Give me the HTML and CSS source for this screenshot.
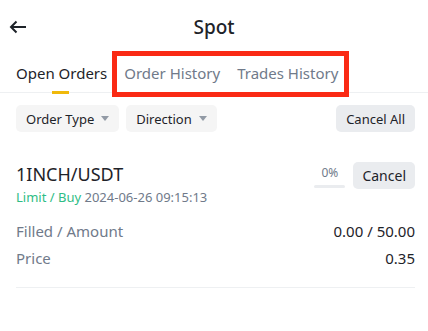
FILE: index.html
```html
<!DOCTYPE html>
<html lang="en">
<head>
    <meta charset="UTF-8">
    <meta name="viewport" content="width=device-width, initial-scale=1.0">
    <title>Spot</title>
    <link rel="stylesheet" href="styles.css">
</head>
<body>
    <header class="topbar">
        <button class="back" type="button" aria-label="Back">
            <svg width="18" height="14" viewBox="0 0 18 14"><path d="M17 7H2M7.5 1.5L2 7l5.5 5.5" fill="none" stroke="#1e2329" stroke-width="2"/></svg>
        </button>
        <h1>Spot</h1>
    </header>

    <nav class="tabs">
        <span class="tab active">Open Orders</span>
        <span class="tab">Order History</span>
        <span class="tab">Trades History</span>
        <div class="highlight"></div>
    </nav>

    <div class="filters">
        <button class="chip" type="button">Order Type <span class="caret"></span></button>
        <button class="chip" type="button">Direction <span class="caret"></span></button>
        <button class="chip dark push" type="button">Cancel All</button>
    </div>

    <div class="order">
        <div class="order-top">
            <div>
                <div class="pair">1INCH/USDT</div>
                <div class="meta"><span class="side">Limit / Buy</span> 2024-06-26 09:15:13</div>
            </div>
            <div class="actions">
                <div class="progress">
                    <span>0%</span>
                    <div class="bar"></div>
                </div>
                <button class="chip dark cancel" type="button">Cancel</button>
            </div>
        </div>
        <div class="row"><span class="label">Filled / Amount</span><span>0.00 / 50.00</span></div>
        <div class="row"><span class="label">Price</span><span>0.35</span></div>
    </div>
</body>
</html>
```

FILE: styles.css
```css
body {
    margin: 0;
    font-family: "Noto Sans", Arial, sans-serif;
    background-color: #fff;
    color: #1e2329;
}
.topbar {
    position: relative;
    height: 54px;
    display: flex;
    align-items: center;
    justify-content: center;
}
.topbar h1 {
    margin: 0;
    font-size: 19px;
    font-weight: 500;
}
.back {
    position: absolute;
    left: 9px;
    top: 20px;
    border: none;
    background: none;
    padding: 0;
    display: flex;
}
.tabs {
    position: relative;
    height: 38px;
    display: flex;
    align-items: center;
    gap: 17px;
    padding: 0 16px;
    border-bottom: 1px solid #eef0f2;
}
.tab {
    position: relative;
    font-size: 15px;
    color: #707a8a;
}
.tab.active {
    color: #1e2329;
}
.tab.active::after {
    content: "";
    position: absolute;
    left: 36px;
    width: 17px;
    height: 3px;
    bottom: -11px;
    background-color: #f0b90b;
}
.highlight {
    position: absolute;
    left: 112px;
    top: -3px;
    width: 227px;
    height: 36px;
    border: 5px solid #fa2a14;
}
.filters {
    display: flex;
    gap: 7px;
    padding: 12px 13px 0 16px;
}
.chip {
    font-family: inherit;
    font-size: 13px;
    color: #1e2329;
    height: 27px;
    padding: 0 10px;
    border: none;
    border-radius: 5px;
    background-color: #f5f5f5;
    display: flex;
    align-items: center;
    gap: 7px;
}
.chip.dark {
    background-color: #eaecef;
}
.push {
    margin-left: auto;
}
.caret {
    width: 0;
    height: 0;
    border-left: 4px solid transparent;
    border-right: 4px solid transparent;
    border-top: 5px solid #929aa5;
}
.order {
    margin: 30px 13px 0 16px;
    padding-bottom: 15px;
    border-bottom: 1px solid #eef0f2;
}
.order-top {
    display: flex;
    justify-content: space-between;
    align-items: flex-start;
    margin-bottom: 12px;
}
.pair {
    font-size: 18px;
    line-height: 24px;
}
.meta {
    font-size: 13px;
    color: #707a8a;
    margin-top: 2px;
}
.side {
    color: #2ebd85;
}
.actions {
    display: flex;
    gap: 8px;
}
.progress {
    display: flex;
    flex-direction: column;
    align-items: center;
    font-size: 12px;
    color: #707a8a;
    padding-top: 2px;
}
.bar {
    width: 31px;
    height: 3px;
    margin-top: 4px;
    border-radius: 2px;
    background-color: #eaecef;
}
.cancel {
    font-size: 14px;
    padding: 0 9px;
}
.row {
    display: flex;
    justify-content: space-between;
    font-size: 15px;
    line-height: 27px;
}
.label {
    color: #707a8a;
}
```
